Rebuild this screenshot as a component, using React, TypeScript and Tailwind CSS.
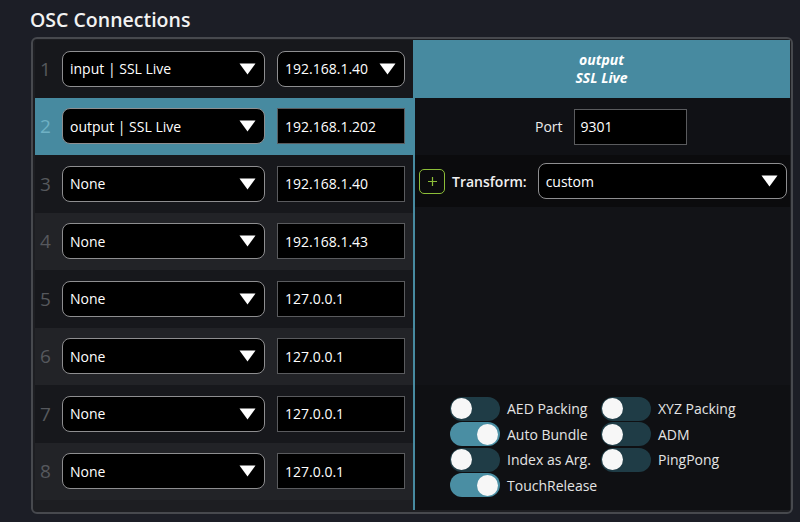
const rows = [
  { n: 1, device: "input | SSL Live", ip: "192.168.1.40", ipSelect: true },
  { n: 2, device: "output | SSL Live", ip: "192.168.1.202", selected: true },
  { n: 3, device: "None", ip: "192.168.1.40" },
  { n: 4, device: "None", ip: "192.168.1.43" },
  { n: 5, device: "None", ip: "127.0.0.1" },
  { n: 6, device: "None", ip: "127.0.0.1" },
  { n: 7, device: "None", ip: "127.0.0.1" },
  { n: 8, device: "None", ip: "127.0.0.1" },
];

const toggles = [
  { label: "AED Packing", on: false },
  { label: "XYZ Packing", on: false },
  { label: "Auto Bundle", on: true },
  { label: "ADM", on: false },
  { label: "Index as Arg.", on: false },
  { label: "PingPong", on: false },
  { label: "TouchRelease", on: true },
];

function Caret() {
  return (
    <svg width="17" height="12" viewBox="0 0 17 12" className="shrink-0">
      <path d="M0.5 0.5 H16.5 L8.5 11.5 Z" fill="#ffffff" />
    </svg>
  );
}

function Toggle({ on, label }: { on: boolean; label: string }) {
  return (
    <div className="flex items-center h-[25.5px]">
      <div
        className={
          on
            ? "w-[50px] h-[24px] rounded-full bg-[#4a8ea3] flex items-center justify-end px-[2px]"
            : "w-[50px] h-[24px] rounded-full bg-[#1f3c46] flex items-center justify-start px-[1px]"
        }
      >
        <div className="w-[21px] h-[21px] rounded-full bg-[#f7f7f7]" />
      </div>
      <span className="ml-[7px] text-[14px] text-[#e4e4e4]">{label}</span>
    </div>
  );
}

export default function App() {
  return (
    <div
      className="w-[800px] h-[522px] bg-[#1c1e26] overflow-hidden text-white"
      style={{ fontFamily: '"Open Sans", "Noto Sans", sans-serif' }}
    >
      <h1 className="pl-[30px] pt-[7px] h-[37px] text-[19.5px] font-semibold leading-[26px] text-[#f2f2f2]">
        OSC Connections
      </h1>

      <div className="ml-[31px] w-[762px] border-2 border-[#47494e] rounded-[6px] bg-[#1d1e22] pl-[2px] pr-[1px] pt-[1px] pb-[2px] flex">
        {/* connection list */}
        <div className="w-[378px] flex flex-col self-start">
          {rows.map((r) => (
            <div
              key={r.n}
              className={
                r.selected
                  ? "h-[57.5px] flex items-center bg-[#478aa0]"
                  : r.n % 2 === 1
                  ? "h-[57.5px] flex items-center bg-[#17181c]"
                  : "h-[57.5px] flex items-center bg-[#222327]"
              }
            >
              <span
                className={
                  r.selected
                    ? "w-[27px] pl-[5px] text-[19px] text-[#6fb1c4]"
                    : "w-[27px] pl-[5px] text-[19px] text-[#56585d]"
                }
              >
                {r.n}
              </span>
              <div className="w-[203px] h-[36px] rounded-[8px] border border-[#8e8e90] bg-black flex items-center justify-between pl-[7px] pr-[8px] text-[14px]">
                <span>{r.device}</span>
                <Caret />
              </div>
              {r.ipSelect ? (
                <div className="ml-[12px] w-[128px] h-[36px] rounded-[8px] border border-[#8e8e90] bg-black flex items-center justify-between pl-[7px] pr-[8px] text-[14px]">
                  <span>{r.ip}</span>
                  <Caret />
                </div>
              ) : (
                <div className="ml-[12px] w-[128px] h-[36px] border border-[#5a5b5e] bg-black flex items-center pl-[7px] text-[14px]">
                  {r.ip}
                </div>
              )}
            </div>
          ))}
        </div>

        {/* detail panel */}
        <div className="flex-1 h-[470px] flex flex-col">
          <div className="h-[58px] bg-[#478aa0] flex flex-col items-center justify-center text-[14px] font-bold italic leading-[18px]">
            <span>output</span>
            <span>SSL Live</span>
          </div>
          <div className="flex-1 flex flex-col border-l-[2px] border-[#478aa0] bg-[#121317]">
            <div className="h-[57px] bg-[#101115] flex items-center pl-[120px]">
              <span className="text-[14px] text-[#ececec]">Port</span>
              <div className="ml-[11px] w-[113px] h-[36px] border border-[#5a5b5e] bg-black flex items-center pl-[6px] text-[14px]">
                9301
              </div>
            </div>
            <div className="h-[52px] bg-[#0b0b0d] flex items-center pl-[4px] pr-[3px]">
              <div className="w-[26px] h-[25px] rounded-[5px] border border-[#8cbd38] flex items-center justify-center">
                <svg width="9" height="9" viewBox="0 0 9 9">
                  <path d="M4.5 0 V9 M0 4.5 H9" stroke="#8cbd38" strokeWidth="1.2" />
                </svg>
              </div>
              <span className="ml-[7px] text-[14px] font-semibold text-[#f0f0f0]">Transform:</span>
              <div className="ml-[11px] flex-1 h-[36px] rounded-[8px] border border-[#8e8e90] bg-black flex items-center justify-between pl-[7px] pr-[8px] text-[14px]">
                <span>custom</span>
                <Caret />
              </div>
            </div>
            <div className="flex-1" />
            <div className="h-[125px] bg-[#0f1013] pl-[35px] pt-[11px]">
              <div className="grid grid-cols-[151px_1fr]">
                {toggles.map((t) => (
                  <Toggle key={t.label} on={t.on} label={t.label} />
                ))}
              </div>
            </div>
          </div>
        </div>
      </div>
    </div>
  );
}
